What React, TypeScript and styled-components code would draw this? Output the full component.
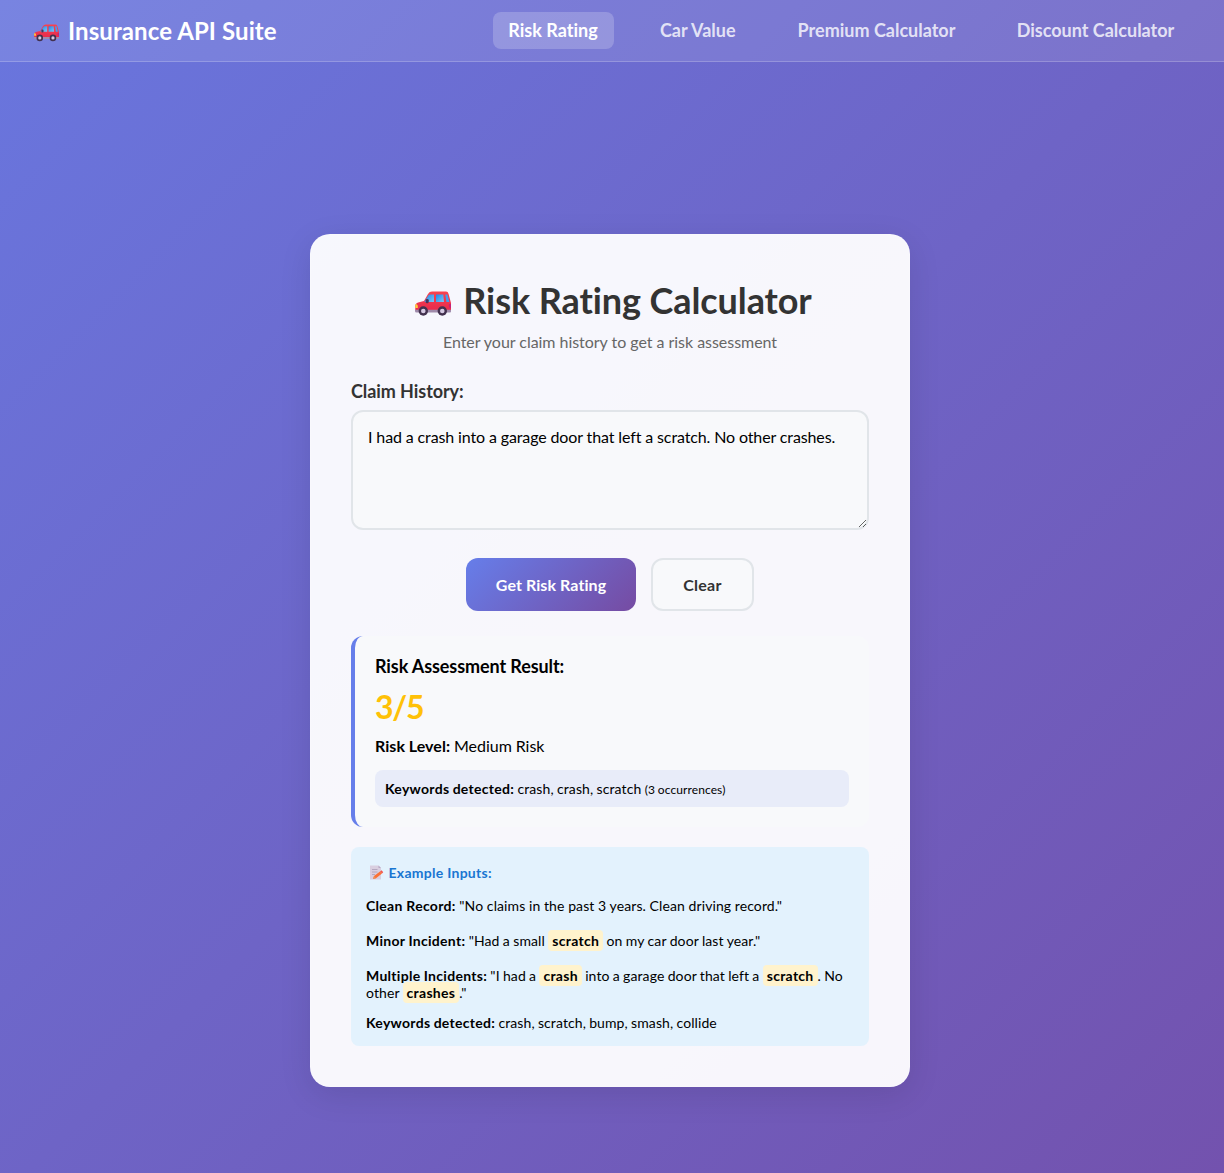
import React, { useState } from "react";
import styled, { createGlobalStyle, css } from "styled-components";

const GlobalStyle = createGlobalStyle`
  * { margin: 0; padding: 0; box-sizing: border-box; }
  body {
    font-family: Lato, "Liberation Sans", sans-serif;
    font-variant-ligatures: none;
    background: #6d64c6;
    color: #000;
  }
`;

const Page = styled.div`
  height: 1173px;
  background: linear-gradient(135deg, #6976de 0%, #7352ae 100%);
  display: flex;
  flex-direction: column;
  overflow: hidden;
`;

const Navbar = styled.nav`
  height: 62px;
  flex: none;
  padding: 0 34px 1px 30px;
  display: flex;
  align-items: center;
  justify-content: space-between;
  background: rgba(255, 255, 255, 0.1);
  border-bottom: 1px solid rgba(255, 255, 255, 0.2);
`;

const Brand = styled.div`
  display: flex;
  align-items: center;
  padding-left: 4px;
  gap: 9px;
  font-size: 24px;
  line-height: 29px;
  font-weight: 700;
  letter-spacing: 0.09px;
  color: #fff;
  svg { margin-top: 6px; }
`;

const NavLinks = styled.div`
  display: flex;
  gap: 30px;
`;

const NavLink = styled.a<{ $active?: boolean; $width: number }>`
  width: ${(p) => p.$width}px;
  padding: 8px 0;
  border-radius: 8px;
  text-align: center;
  white-space: nowrap;
  font-size: 18px;
  line-height: 21px;
  font-weight: 700;
  color: rgba(255, 255, 255, 0.8);
  cursor: pointer;
  ${(p) =>
    p.$active &&
    css`
      color: #fff;
      background: rgba(255, 255, 255, 0.2);
    `}
`;

const Main = styled.main`
  display: flex;
  justify-content: center;
  padding: 172px 4px 0 0;
`;

const Card = styled.section`
  width: 600px;
  height: 853px;
  padding: 40px;
  border: 1px solid rgba(255, 255, 255, 0.2);
  border-radius: 20px;
  background: rgba(255, 255, 255, 0.95);
  box-shadow: 0 8px 32px rgba(0, 0, 0, 0.1);
`;

const Title = styled.h1`
  display: flex;
  justify-content: center;
  align-items: center;
  gap: 12px;
  padding: 4px 0 0 7px;
  font-size: 36px;
  line-height: 42px;
  font-weight: 700;
  letter-spacing: -0.09px;
  color: #333;
  svg { margin-top: 7px; }
`;

const Subtitle = styled.p`
  margin-top: 11px;
  text-align: center;
  font-size: 16px;
  line-height: 20px;
  letter-spacing: -0.035px;
  color: #666;
`;

const Label = styled.label`
  display: block;
  margin-top: 29px;
  font-size: 18px;
  line-height: 21px;
  font-weight: 700;
  letter-spacing: -0.07px;
  color: #333;
`;

const ClaimInput = styled.textarea`
  display: block;
  width: 100%;
  height: 120px;
  margin-top: 8px;
  padding: 15px;
  border: 2px solid #e1e5e9;
  border-radius: 12px;
  background: #f8f9fb;
  font: 400 16px/20px Lato, "Liberation Sans", sans-serif;
  font-variant-ligatures: none;
  letter-spacing: -0.125px;
  color: #000;
  resize: vertical;
  outline: none;
`;

const Actions = styled.div`
  display: flex;
  justify-content: center;
  gap: 15px;
  margin: 28px 0 25px;
`;

const Button = styled.button<{ $primary?: boolean }>`
  width: 103px;
  height: 53px;
  border-radius: 12px;
  font: 700 16px/19px Lato, "Liberation Sans", sans-serif;
  font-variant-ligatures: none;
  letter-spacing: 0.25px;
  border: 2px solid #e1e5e9;
  background: #f8f9fb;
  color: #333;
  cursor: pointer;
  ${(p) =>
    p.$primary &&
    css`
      width: 170px;
      letter-spacing: 0.08px;
      border: none;
      color: #fff;
      background: linear-gradient(135deg, #667eea 0%, #764ba2 100%);
    `}
`;

const Result = styled.section`
  height: 191px;
  padding: 20px;
  border-left: 4px solid #667eea;
  border-radius: 12px;
  background: #f8f9fb;
`;

const ResultTitle = styled.h3`
  font-size: 18px;
  line-height: 21px;
  font-weight: 700;
  letter-spacing: -0.1px;
`;

const Score = styled.div`
  margin-top: 10px;
  font-size: 32px;
  line-height: 40px;
  font-weight: 700;
  letter-spacing: -1.2px;
  color: #ffc107;
`;

const Level = styled.p`
  margin-top: 9px;
  font-size: 16px;
  line-height: 20px;
  word-spacing: -0.3px;
`;

const Strong = styled.strong<{ $spacing?: number }>`
  font-weight: 700;
  letter-spacing: ${(p) => p.$spacing ?? 0.29}px;
`;

const Keywords = styled.div`
  margin-top: 14px;
  height: 37px;
  padding: 10px;
  border-radius: 8px;
  background: #e8ecf9;
  font-size: 14px;
  line-height: 17px;
  letter-spacing: 0.1px;
  word-spacing: -0.4px;
  small { font-size: 12px; }
`;

const Examples = styled.section`
  margin-top: 20px;
  height: 199px;
  padding: 15px;
  border-radius: 8px;
  background: #e3f2fd;
  font-size: 14px;
  line-height: 17px;
  letter-spacing: 0.09px;
`;

const ExamplesTitle = styled.h4`
  display: flex;
  align-items: center;
  gap: 4.5px;
  padding-left: 4px;
  height: 21px;
  font-size: 14px;
  font-weight: 700;
  letter-spacing: 0.27px;
  color: #1976d2;
`;

const Example = styled.p<{ $top: number; $words?: number }>`
  margin-top: ${(p) => p.$top}px;
  word-spacing: ${(p) => p.$words ?? -0.4}px;
`;

const Mark = styled.span`
  padding: 2px 4px;
  border-radius: 4px;
  background: #fff3cd;
  font-weight: 700;
  letter-spacing: 0.29px;
`;

const CarIcon = ({ size }: { size: number }) => (
  <svg width={size} height={size * (25 / 36)} viewBox="0 0 36 25">
    <defs>
      <linearGradient id="glass" x1="0" y1="0" x2="1" y2="1">
        <stop offset="0" stopColor="#1f86ea" />
        <stop offset="1" stopColor="#7cc8f5" />
      </linearGradient>
      <linearGradient id="paint" x1="0" y1="0" x2="0" y2="1">
        <stop offset="0" stopColor="#f8434f" />
        <stop offset="1" stopColor="#e82a4c" />
      </linearGradient>
    </defs>
    <path d="M.3 20V14.5Q.5 12 4 11.2L9 10 13 3Q14.4.6 17 .6H31Q33 .6 33.6 3L36 12V20Z" fill="url(#paint)" />
    <path d="M0 18.7H36V20.5Q36 21.5 35 21.5H1.5Q0 21.5 0 20Z" fill="#a08bab" />
    <path d="M9.5 10.6 13.3 4.6Q14 3.4 15.2 3.4H19V11H9.5Z" fill="url(#glass)" />
    <path d="M21 3.4H28.3L29 11H21Z" fill="url(#glass)" />
    <path d="M30.3 3.4H32.4L34.4 11H31.4Z" fill="#439df0" />
    <rect x="10.7" y="8" width="3" height="4.2" rx="1.3" fill="#43365c" />
    <path d="M.3 13.2H1.8Q3.3 14.5 2.8 17H.3Z" fill="#ffce3d" />
    <path d="M34.2 13H36V17H34.7Q33 15 34.2 13Z" fill="#c62276" />
    <circle cx="8.3" cy="20" r="4.7" fill="#42314e" />
    <circle cx="27.3" cy="20" r="4.7" fill="#42314e" />
    <circle cx="8.3" cy="20" r="2.3" fill="#d5c9e2" />
    <circle cx="27.3" cy="20" r="2.3" fill="#d5c9e2" />
  </svg>
);

const MemoIcon = () => (
  <svg width="14" height="15" viewBox="0 0 14 15">
    <path d="M0 .5H8.5L11 3V14.5H0Z" fill="#d9cfe0" />
    <path d="M8.5 .5 11 3H8.5Z" fill="#b7a8c4" />
    <path d="M2 4.5H7.5M2 7H7.5M2 9.5H5" stroke="#b5a8c0" strokeWidth="1" />
    <path d="M3 14 4 11 10 6.5 12 8.5 6 13.3Z" fill="#fb7135" />
    <path d="M10 6.4 11.6 5.3 13.2 7.3 12 8.5Z" fill="#f2544c" />
    <path d="M3 14 4 11 6 13.3Z" fill="#e9925e" />
  </svg>
);

const LINKS = [
  { label: "Risk Rating", width: 121 },
  { label: "Car Value", width: 108.5 },
  { label: "Premium Calculator", width: 189 },
  { label: "Discount Calculator", width: 189 },
];

export default function App() {
  const [claim, setClaim] = useState(
    "I had a crash into a garage door that left a scratch. No other crashes."
  );
  return (
    <Page>
      <GlobalStyle />
      <Navbar>
        <Brand>
          <CarIcon size={25} />
          <span>Insurance API Suite</span>
        </Brand>
        <NavLinks>
          {LINKS.map(({ label, width }, i) => (
            <NavLink key={label} $active={i === 0} $width={width}>
              {label}
            </NavLink>
          ))}
        </NavLinks>
      </Navbar>
      <Main>
        <Card>
          <Title>
            <CarIcon size={36} />
            <span>Risk Rating Calculator</span>
          </Title>
          <Subtitle>Enter your claim history to get a risk assessment</Subtitle>
          <Label htmlFor="claim">Claim History:</Label>
          <ClaimInput
            id="claim"
            spellCheck={false}
            value={claim}
            onChange={(e) => setClaim(e.target.value)}
          />
          <Actions>
            <Button $primary>Get Risk Rating</Button>
            <Button onClick={() => setClaim("")}>Clear</Button>
          </Actions>
          <Result>
            <ResultTitle>Risk Assessment Result:</ResultTitle>
            <Score>3/5</Score>
            <Level>
              <Strong $spacing={0.06}>Risk Level:</Strong> Medium Risk
            </Level>
            <Keywords>
              <Strong>Keywords detected:</Strong> crash, crash, scratch{" "}
              <small>(3 occurrences)</small>
            </Keywords>
          </Result>
          <Examples>
            <ExamplesTitle>
              <MemoIcon />
              <span>Example Inputs:</span>
            </ExamplesTitle>
            <Example $top={14} $words={0}>
              <Strong>Clean Record:</Strong> "No claims in the past 3 years. Clean driving record."
            </Example>
            <Example $top={18} $words={-0.3}>
              <Strong>Minor Incident:</Strong> "Had a small <Mark>scratch</Mark> on my car door last
              year."
            </Example>
            <Example $top={18}>
              <Strong>Multiple Incidents:</Strong> "I had a <Mark>crash</Mark> into a garage door
              that left a <Mark>scratch</Mark>. No other <Mark>crashes</Mark>."
            </Example>
            <Example $top={13}>
              <Strong>Keywords detected:</Strong> crash, scratch, bump, smash, collide
            </Example>
          </Examples>
        </Card>
      </Main>
    </Page>
  );
}
